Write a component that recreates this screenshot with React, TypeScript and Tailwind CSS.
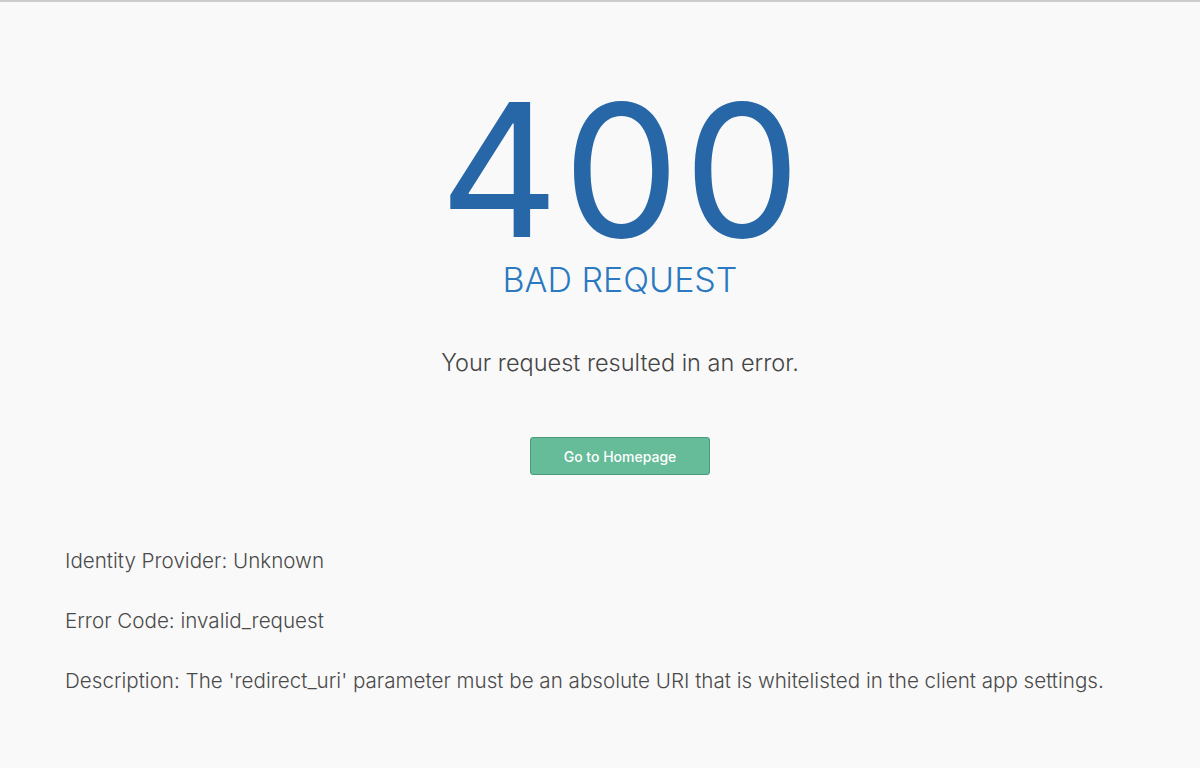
import React from "react";

export default function App() {
  return (
    <div
      className="min-h-[768px] w-full bg-[#f9f9f9] border-t-2 border-[#cdcdcd] text-[#4a4a4a]"
      style={{ fontFamily: "Inter, 'Liberation Sans', sans-serif" }}
    >
      <div className="flex flex-col items-center pt-[80px] pl-[40px]">
        <div className="text-[185px] leading-[177px] font-normal text-[#2767a7] tracking-[4px] pl-[4px]">400</div>
        <div className="mt-[1px] text-[34px] leading-[40px] font-light text-[#2b79c0]">BAD REQUEST</div>
        <div className="mt-[48px] text-[23.5px] leading-[30px] font-light text-[#444]">
          Your request resulted in an error.
        </div>
        <button className="mt-[59px] w-[180px] h-[38px] rounded-[3px] bg-[#66bb99] border border-[#4c9a7c] text-white text-[14px] font-medium">
          Go to Homepage
        </button>
      </div>
      <div className="pl-[65px] mt-[72px] flex flex-col gap-[32px] text-[20.6px] leading-[28px] font-light text-[#4a4a4a]">
        <p>Identity Provider: Unknown</p>
        <p>Error Code: invalid_request</p>
        <p>Description: The 'redirect_uri' parameter must be an absolute URI that is whitelisted in the client app settings.</p>
      </div>
    </div>
  );
}
